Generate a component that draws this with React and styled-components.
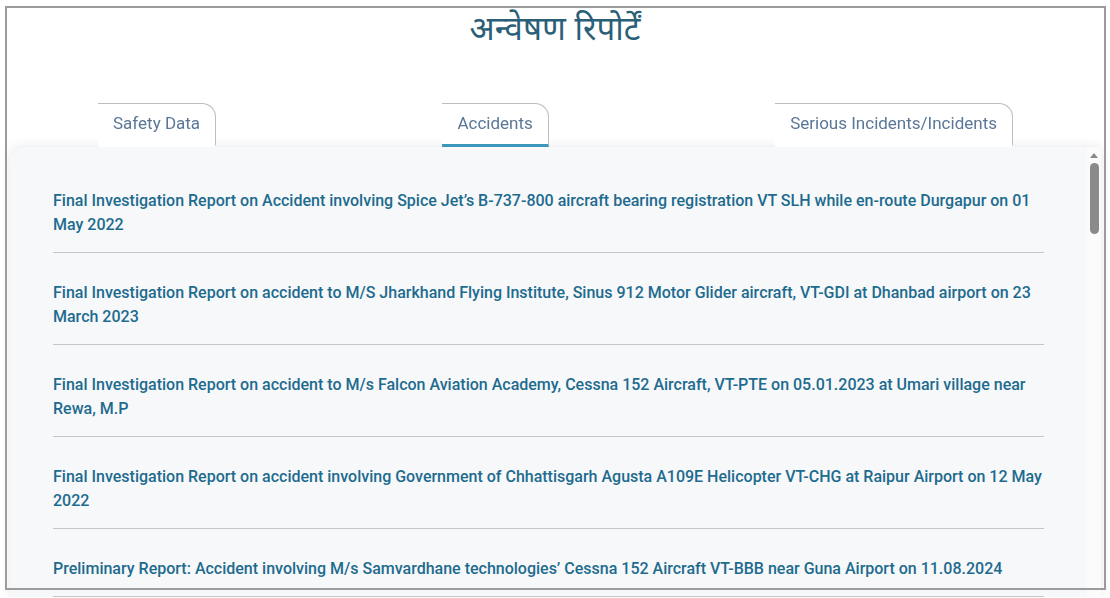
import React from 'react';
import styled, { createGlobalStyle } from 'styled-components';

const reports = [
    'Final Investigation Report on Accident involving Spice Jet’s B-737-800 aircraft bearing registration VT SLH while en-route Durgapur on 01 May 2022',
    'Final Investigation Report on accident to M/S Jharkhand Flying Institute, Sinus 912 Motor Glider aircraft, VT-GDI at Dhanbad airport on 23 March 2023',
    'Final Investigation Report on accident to M/s Falcon Aviation Academy, Cessna 152 Aircraft, VT-PTE on 05.01.2023 at Umari village near Rewa, M.P',
    'Final Investigation Report on accident involving Government of Chhattisgarh Agusta A109E Helicopter VT-CHG at Raipur Airport on 12 May 2022',
    'Preliminary Report: Accident involving M/s Samvardhane technologies’ Cessna 152 Aircraft VT-BBB near Guna Airport on 11.08.2024',
];

const tabs = [
    { label: 'Safety Data' },
    { label: 'Accidents', active: true },
    { label: 'Serious Incidents/Incidents' },
];

function App() {
    return (
        <>
            <GlobalStyle />
            <Page>
                <Title>अन्वेषण रिपोर्टें</Title>
                <TabRow>
                    {tabs.map((t) => (
                        <Tab key={t.label} $active={t.active}>
                            {t.label}
                        </Tab>
                    ))}
                </TabRow>
                <Card>
                    <List>
                        {reports.map((r) => (
                            <Item key={r}>
                                <ReportLink href="#">{r}</ReportLink>
                            </Item>
                        ))}
                    </List>
                    <ScrollTrack>
                        <ArrowUp />
                        <Thumb />
                    </ScrollTrack>
                </Card>
            </Page>
            <Frame />
        </>
    );
}

export default App;

const GlobalStyle = createGlobalStyle`
    html, body {
        margin: 0;
        padding: 0;
        overflow: hidden;
        background: #ffffff;
    }
    body {
        font-family: Roboto, 'Liberation Sans', sans-serif;
    }
    * {
        box-sizing: border-box;
    }
`;

const Page = styled.div`
    width: 1110px;
    display: flex;
    flex-direction: column;
`;

const Title = styled.h1`
    margin: 0;
    padding-top: 4px;
    height: 103px;
    text-align: center;
    font-family: 'Noto Sans', 'Noto Sans Devanagari', sans-serif;
    font-weight: 400;
    font-size: 33px;
    line-height: 48px;
    color: #2b5f78;
`;

const TabRow = styled.div`
    display: flex;
    justify-content: space-between;
    padding: 0 97px 0 98px;
    height: 44px;
`;

const Tab = styled.div`
    height: 44px;
    padding: 9px 15px 0;
    border-top: 1px solid #bdbdbd;
    border-right: 1px solid #bdbdbd;
    border-top-right-radius: 14px;
    border-bottom: 3px solid ${(p) => (p.$active ? '#3b98ba' : 'transparent')};
    font-size: 17px;
    line-height: 20px;
    color: #5b7797;
    background: #ffffff;
    position: relative;
    z-index: 1;
`;

const Card = styled.div`
    margin: 0 9px 0 10px;
    display: flex;
    background: #f7f8fa;
    border-top-left-radius: 14px;
    box-shadow: 0 0 12px rgba(0, 0, 0, 0.1);
    position: relative;
`;

const List = styled.div`
    flex: 1;
    padding: 14px 43px 0;
`;

const Item = styled.div`
    padding: 28px 0 15px;
    border-bottom: 1px solid #c6c6c6;
`;

const ReportLink = styled.a`
    display: block;
    font-size: 16px;
    font-weight: 500;
    line-height: 24px;
    color: #1d6b8e;
    text-decoration: none;
`;

const ScrollTrack = styled.div`
    width: 14px;
    display: flex;
    flex-direction: column;
    align-items: center;
    padding-top: 6px;
    gap: 5px;
    background: #fbfbfb;
`;

const ArrowUp = styled.div`
    width: 0;
    height: 0;
    border-left: 4px solid transparent;
    border-right: 4px solid transparent;
    border-bottom: 5px solid #8a8a8a;
`;

const Thumb = styled.div`
    width: 9px;
    height: 71px;
    border-radius: 5px;
    background: #8a8a8a;
`;

const Frame = styled.div`
    position: fixed;
    left: 5px;
    top: 6px;
    width: 1101px;
    height: 584px;
    border: 2px solid #9b9b9b;
    pointer-events: none;
`;
